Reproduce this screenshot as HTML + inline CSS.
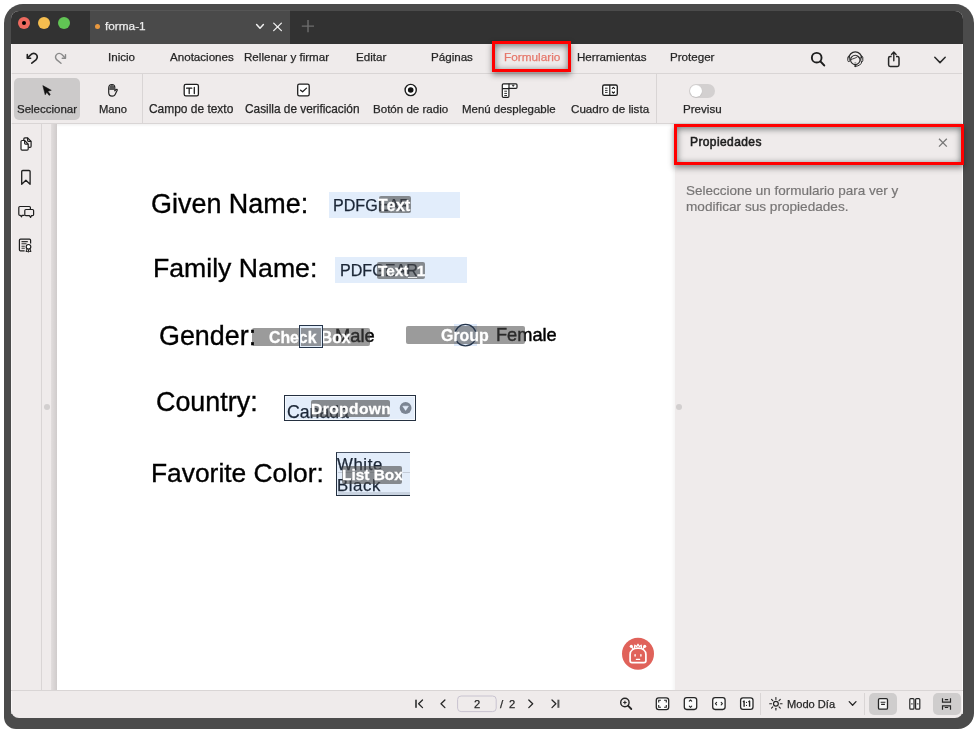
<!DOCTYPE html>
<html><head><meta charset="utf-8"><style>
html,body{margin:0;padding:0;}
body{width:974px;height:729px;position:relative;overflow:hidden;background:#fff;font-family:"Liberation Sans", sans-serif;}
.t{position:absolute;white-space:nowrap;line-height:1;font-family:"Liberation Sans", sans-serif;will-change:transform;}
</style></head><body>
<div style="position:absolute;left:4px;top:4px;width:970px;height:725px;background:#4b4b4b;border-radius:19px 19px 16px 12px;"></div>
<div style="position:absolute;left:11px;top:10.6px;width:952px;height:707.4px;background:#efebeb;border-radius:8px;overflow:hidden;"></div>
<div style="position:absolute;left:11px;top:10.6px;width:952px;height:33.4px;background:#323232;border-radius:8px 8px 0 0;"></div>
<div style="position:absolute;left:90px;top:10.6px;width:200px;height:33.4px;background:#4a4a4a;"></div>
<div style="position:absolute;left:90px;top:10px;width:200px;height:1px;background:#565656;"></div>
<div style="position:absolute;left:18px;top:17.1px;width:12.3px;height:12.3px;border-radius:50%;background:#ee6a5f;"></div>
<div style="position:absolute;left:22.1px;top:21.2px;width:4.1px;height:4.1px;border-radius:50%;background:#000;"></div>
<div style="position:absolute;left:38px;top:17.1px;width:12.3px;height:12.3px;border-radius:50%;background:#f5bd4f;"></div>
<div style="position:absolute;left:58px;top:17.1px;width:12.3px;height:12.3px;border-radius:50%;background:#61c454;"></div>
<div style="position:absolute;left:95.1px;top:24.2px;width:5px;height:5px;border-radius:50%;background:#e9983e;"></div>
<div class="t" style="left:105.00px;top:21.00px;font-size:11.8px;color:#ececec;font-weight:normal;-webkit-text-stroke:0.25px currentColor;">forma-1</div>
<div style="position:absolute;left:11px;top:73px;width:952px;height:1px;background:#d9d5d5;"></div>
<div style="position:absolute;left:11px;top:123px;width:952px;height:1px;background:#d9d5d5;"></div>
<div class="t" style="left:107.80px;top:51.00px;font-size:11.6px;color:#262626;font-weight:normal;-webkit-text-stroke:0.25px currentColor;">Inicio</div>
<div class="t" style="left:170.00px;top:51.00px;font-size:11.6px;color:#262626;font-weight:normal;-webkit-text-stroke:0.25px currentColor;">Anotaciones</div>
<div class="t" style="left:244.40px;top:51.00px;font-size:11.6px;color:#262626;font-weight:normal;-webkit-text-stroke:0.25px currentColor;">Rellenar y firmar</div>
<div class="t" style="left:356.40px;top:51.00px;font-size:11.6px;color:#262626;font-weight:normal;-webkit-text-stroke:0.25px currentColor;">Editar</div>
<div class="t" style="left:431.20px;top:51.00px;font-size:11.6px;color:#262626;font-weight:normal;-webkit-text-stroke:0.25px currentColor;">Páginas</div>
<div class="t" style="left:577.00px;top:51.00px;font-size:11.6px;color:#262626;font-weight:normal;-webkit-text-stroke:0.25px currentColor;">Herramientas</div>
<div class="t" style="left:669.80px;top:51.00px;font-size:11.6px;color:#262626;font-weight:normal;-webkit-text-stroke:0.25px currentColor;">Proteger</div>
<div class="t" style="left:503.60px;top:52.00px;font-size:11.8px;color:#e5776b;font-weight:normal;-webkit-text-stroke:0.25px currentColor;">Formulario</div>
<div style="position:absolute;left:14px;top:78px;width:66px;height:42px;background:#cccaca;border-radius:5px;"></div>
<div class="t" style="left:17.00px;top:104.00px;font-size:11.5px;color:#262626;font-weight:normal;-webkit-text-stroke:0.25px currentColor;">Seleccionar</div>
<div class="t" style="left:98.80px;top:104.00px;font-size:11.2px;color:#262626;font-weight:normal;-webkit-text-stroke:0.25px currentColor;">Mano</div>
<div class="t" style="left:149.30px;top:104.00px;font-size:11.95px;color:#262626;font-weight:normal;-webkit-text-stroke:0.25px currentColor;">Campo de texto</div>
<div class="t" style="left:245.20px;top:104.00px;font-size:11.85px;color:#262626;font-weight:normal;-webkit-text-stroke:0.25px currentColor;">Casilla de verificación</div>
<div class="t" style="left:372.70px;top:104.00px;font-size:11.57px;color:#262626;font-weight:normal;-webkit-text-stroke:0.25px currentColor;">Botón de radio</div>
<div class="t" style="left:462.00px;top:104.00px;font-size:11.46px;color:#262626;font-weight:normal;-webkit-text-stroke:0.25px currentColor;">Menú desplegable</div>
<div class="t" style="left:570.50px;top:103.00px;font-size:11.62px;color:#262626;font-weight:normal;-webkit-text-stroke:0.25px currentColor;">Cuadro de lista</div>
<div class="t" style="left:682.90px;top:104.00px;font-size:11.59px;color:#262626;font-weight:normal;-webkit-text-stroke:0.25px currentColor;">Previsu</div>
<div style="position:absolute;left:142px;top:74px;width:1px;height:49px;background:#d9d5d5;"></div>
<div style="position:absolute;left:656px;top:74px;width:1px;height:49px;background:#d9d5d5;"></div>
<div style="position:absolute;left:689px;top:84px;width:26px;height:13.6px;background:#d3d0d0;border-radius:7px;"></div>
<div style="position:absolute;left:689.6px;top:84.6px;width:12.4px;height:12.4px;border-radius:50%;background:#fff;box-shadow:0 0.5px 1px rgba(0,0,0,0.15);"></div>
<div style="position:absolute;left:41px;top:124px;width:1px;height:566px;background:#d9d5d5;"></div>
<div style="position:absolute;left:51px;top:124px;width:6px;height:566px;background:linear-gradient(90deg,#e2dede,#cfcbcb);"></div>
<div style="position:absolute;left:43.7px;top:404px;width:6px;height:6px;border-radius:50%;background:#d2cfcf;"></div>
<div style="position:absolute;left:57px;top:124px;width:618px;height:566px;background:#fff;"></div>
<div style="position:absolute;left:328.6px;top:191.7px;width:131.9px;height:26.1px;background:#e2edfb;"></div>
<div class="t" style="left:333.40px;top:197.00px;font-size:16.1px;color:#1b2636;font-weight:normal;-webkit-text-stroke:0.25px #1b2636;">PDFGEAR</div>
<div style="position:absolute;left:378.5px;top:196.1px;width:32.3px;height:17.3px;background:rgba(72,72,72,0.6);border-radius:2px;"></div>
<div class="t" style="left:378.40px;top:198.00px;font-size:15.8px;color:#fff;font-weight:bold;letter-spacing:0.35px;-webkit-text-stroke:0.3px #fff;">Text</div>
<div style="position:absolute;left:334.9px;top:257.1px;width:132.5px;height:26.3px;background:#e2edfb;"></div>
<div class="t" style="left:339.70px;top:262.00px;font-size:16.1px;color:#1b2636;font-weight:normal;-webkit-text-stroke:0.25px #1b2636;">PDFGEAR</div>
<div style="position:absolute;left:377.2px;top:261.7px;width:48.2px;height:17.0px;background:rgba(72,72,72,0.6);border-radius:2px;"></div>
<div class="t" style="left:378.20px;top:263.00px;font-size:15.3px;color:#fff;font-weight:bold;-webkit-text-stroke:0.3px #fff;">Text_1</div>
<div style="position:absolute;left:299.1px;top:324.7px;width:23.7px;height:23.8px;background:#e3eefb;"></div>
<div class="t" style="left:334.60px;top:327.00px;font-size:18.3px;color:#000;font-weight:normal;-webkit-text-stroke:0.45px #000;">Male</div>
<div style="position:absolute;left:252.2px;top:327.8px;width:117.9px;height:17.8px;background:rgba(75,75,75,0.557);border-radius:2px;"></div>
<div class="t" style="left:269.20px;top:330.00px;font-size:15.8px;color:#fff;font-weight:bold;-webkit-text-stroke:0.3px #fff;">Check Box</div>
<div style="position:absolute;left:299.1px;top:324.7px;width:23.7px;height:23.8px;box-sizing:border-box;border:1.5px solid #26354a;box-shadow:inset 0 0 0 1px rgba(227,238,251,0.9);"></div>
<div style="position:absolute;left:453.8px;top:324px;width:23.3px;height:22.2px;background:#dfeafa;"></div>
<div class="t" style="left:496.20px;top:326.00px;font-size:18.2px;color:#000;font-weight:normal;-webkit-text-stroke:0.45px #000;">Female</div>
<div style="position:absolute;left:406.1px;top:326.4px;width:118.7px;height:17.2px;background:rgba(75,75,75,0.557);border-radius:2px;"></div>
<svg style="position:absolute;left:0;top:0" width="974" height="729" viewBox="0 0 974 729" fill="none"><circle cx="465.5" cy="335.1" r="10.7" stroke="#26354a" stroke-width="1.3"/></svg>
<div class="t" style="left:441.00px;top:328.00px;font-size:15.9px;color:#fff;font-weight:bold;-webkit-text-stroke:0.3px #fff;">Group</div>
<div style="position:absolute;left:284.2px;top:394.7px;width:131.6px;height:26.2px;box-sizing:border-box;border:1.4px solid #243040;box-shadow:inset 0 0 0 1px #f4f8fd;background:#e3edfa;"></div>
<div class="t" style="left:287.40px;top:404.00px;font-size:17.7px;color:#1b2636;font-weight:normal;-webkit-text-stroke:0.25px #1b2636;">Canada</div>
<div style="position:absolute;left:310.9px;top:399.6px;width:79.1px;height:17.0px;background:rgba(72,72,72,0.6);border-radius:2px;"></div>
<div class="t" style="left:310.60px;top:401.00px;font-size:15.5px;color:#fff;font-weight:bold;letter-spacing:0.45px;-webkit-text-stroke:0.3px #fff;">Dropdown</div>
<div style="position:absolute;left:335.8px;top:452.2px;width:73.9px;height:44.1px;box-sizing:border-box;border-left:1.8px solid #243040;border-top:1.2px solid #4a5566;border-bottom:1.4px solid #243040;background:#e3edfa;"></div>
<div style="position:absolute;left:337.6px;top:471.6px;width:72px;height:0.8px;background:#c4ccd8;"></div>
<div style="position:absolute;left:337.6px;top:491.6px;width:72px;height:3.4px;background:#c9d3e0;"></div>
<div class="t" style="left:336.90px;top:457.00px;font-size:16.8px;color:#1b2636;font-weight:normal;letter-spacing:0.6px;-webkit-text-stroke:0.25px #1b2636;">White</div>
<div class="t" style="left:336.90px;top:478.00px;font-size:16.8px;color:#1b2636;font-weight:normal;letter-spacing:0.6px;-webkit-text-stroke:0.25px #1b2636;">Black</div>
<div style="position:absolute;left:342px;top:466px;width:60.2px;height:17.5px;background:rgba(72,72,72,0.6);border-radius:2px;"></div>
<div class="t" style="left:342.30px;top:467.00px;font-size:15.4px;color:#fff;font-weight:bold;-webkit-text-stroke:0.3px #fff;">List Box</div>
<div style="position:absolute;left:57px;top:124px;width:618px;height:3px;background:linear-gradient(180deg,rgba(0,0,0,0.05),rgba(0,0,0,0));"></div>
<div style="position:absolute;left:671px;top:124px;width:4px;height:566px;background:linear-gradient(90deg,rgba(0,0,0,0),rgba(0,0,0,0.035));"></div>
<div style="position:absolute;left:676.2px;top:404px;width:6px;height:6px;border-radius:50%;background:#d2cfcf;"></div>
<div style="position:absolute;left:962px;top:44px;width:1px;height:670px;background:rgba(255,255,255,0.75);"></div>
<div style="position:absolute;left:11px;top:44px;width:1px;height:670px;background:rgba(255,255,255,0.6);"></div>
<div style="position:absolute;left:11px;top:690px;width:952px;height:1px;background:#d9d5d5;"></div>
<div class="t" style="left:151.00px;top:191.00px;font-size:26.95px;color:#000;font-weight:normal;-webkit-text-stroke:0.35px #000;">Given Name:</div>
<div class="t" style="left:152.90px;top:255.00px;font-size:26.65px;color:#000;font-weight:normal;-webkit-text-stroke:0.35px #000;">Family Name:</div>
<div class="t" style="left:159.00px;top:323.00px;font-size:26.9px;color:#000;font-weight:normal;-webkit-text-stroke:0.35px #000;">Gender:</div>
<div class="t" style="left:156.10px;top:389.00px;font-size:26.9px;color:#000;font-weight:normal;-webkit-text-stroke:0.35px #000;">Country:</div>
<div class="t" style="left:151.40px;top:460.00px;font-size:26.37px;color:#000;font-weight:normal;-webkit-text-stroke:0.35px #000;">Favorite Color:</div>
<div class="t" style="left:689.60px;top:136.00px;font-size:12px;color:#1e1e1e;font-weight:normal;letter-spacing:0.4px;-webkit-text-stroke:0.55px #1e1e1e;">Propiedades</div>
<div class="t" style="left:686.00px;top:184.00px;font-size:13.5px;color:#777575;font-weight:normal;-webkit-text-stroke:0.2px #777575;">Seleccione un formulario para ver y</div>
<div class="t" style="left:686.00px;top:200.00px;font-size:13.6px;color:#777575;font-weight:normal;-webkit-text-stroke:0.2px #777575;">modificar sus propiedades.</div>
<div class="t" style="left:786.50px;top:699.00px;font-size:11.1px;color:#262626;font-weight:normal;-webkit-text-stroke:0.25px currentColor;">Modo Día</div>
<div class="t" style="left:474.00px;top:699.00px;font-size:11.2px;color:#262626;font-weight:normal;-webkit-text-stroke:0.25px currentColor;">2</div>
<div class="t" style="left:500.30px;top:698.00px;font-size:11.6px;color:#262626;font-weight:normal;-webkit-text-stroke:0.25px currentColor;">/</div>
<div class="t" style="left:509.40px;top:699.00px;font-size:11.2px;color:#262626;font-weight:normal;-webkit-text-stroke:0.25px currentColor;">2</div>
<div style="position:absolute;left:760px;top:693px;width:1px;height:22px;background:#d9d5d5;"></div>
<div style="position:absolute;left:864px;top:693px;width:1px;height:22px;background:#d9d5d5;"></div>
<div style="position:absolute;left:869px;top:693px;width:27.6px;height:21.6px;background:#cfcdcd;border-radius:5px;"></div>
<div style="position:absolute;left:933px;top:693px;width:27.7px;height:21.6px;background:#cfcdcd;border-radius:5px;"></div>
<svg style="position:absolute;left:0;top:0" width="974" height="729" viewBox="0 0 974 729" fill="none"><path d="M256.6 24.6 L260 28.2 L263.4 24.6" stroke="#f0f0f0" stroke-width="1.5" stroke-linecap="round" stroke-linejoin="round"/><path d="M273.7 23.1 L281.4 30.6 M281.4 23.1 L273.7 30.6" stroke="#f0f0f0" stroke-width="1.3" stroke-linecap="round"/><path d="M308 20 V32.2 M301.8 26.1 H314" stroke="#6e6e6e" stroke-width="1.4"/><path d="M27.3 54.6 V58.2 H30.6" stroke="#222" stroke-width="1.6" stroke-linecap="round" stroke-linejoin="round"/><path d="M27.6 57.9 L30.9 54.6 C32.4 53 35 52.9 36.3 54.6 C37.6 56.2 37.3 58.4 35.9 59.9 L31.8 63.2" stroke="#222" stroke-width="1.6" stroke-linecap="round"/><g transform="translate(92.8 0) scale(-1 1)"><path d="M27.3 54.6 V58.2 H30.6" stroke="#8a8a8a" stroke-width="1.4" stroke-linecap="round" stroke-linejoin="round"/><path d="M27.6 57.9 L30.9 54.6 C32.4 53 35 52.9 36.3 54.6 C37.6 56.2 37.3 58.4 35.9 59.9 L31.8 63.2" stroke="#8a8a8a" stroke-width="1.4" stroke-linecap="round"/></g><circle cx="816.7" cy="57.7" r="4.85" stroke="#1e1e1e" stroke-width="1.9"/><path d="M820.4 61.4 L824.2 65.4" stroke="#1e1e1e" stroke-width="2.1" stroke-linecap="round"/><path d="M848.9 58.2 A6.4 6.4 0 0 1 861.7 58.2" stroke="#2a2a2a" stroke-width="1.3"/><circle cx="855.3" cy="59.9" r="4.7" stroke="#2a2a2a" stroke-width="1.1"/><rect x="847.8" y="56.4" width="2" height="5.2" rx="1" stroke="#2a2a2a" stroke-width="1"/><rect x="860.8" y="56.4" width="2" height="5.2" rx="1" stroke="#2a2a2a" stroke-width="1"/><path d="M850.7 59.6 C852.6 58.8 855.6 58.4 857.5 56.5 C858 57.3 858.6 58 859.9 58.5" stroke="#2a2a2a" stroke-width="0.9"/><path d="M861.8 61.6 C861.3 64.6 858.7 66.1 855.6 66.2" stroke="#2a2a2a" stroke-width="1"/><circle cx="855.3" cy="66.1" r="1.1" fill="#2a2a2a"/><path d="M854.5 62.9 H856.2" stroke="#555" stroke-width="0.8"/><path d="M891.6 56.5 H890.2 C889.1 56.5 888.6 57 888.6 58.1 V64.8 C888.6 65.9 889.1 66.4 890.2 66.4 H897.4 C898.5 66.4 899 65.9 899 64.8 V58.1 C899 57 898.5 56.5 897.4 56.5 H896" stroke="#262626" stroke-width="1.5"/><path d="M893.8 60.8 V52.2 M891.5 54.4 L893.8 52 L896.1 54.4" stroke="#262626" stroke-width="1.4" stroke-linecap="round" stroke-linejoin="round"/><path d="M934.8 57.3 L940 62.6 L945.2 57.3" stroke="#2a2a2a" stroke-width="1.5" stroke-linecap="round" stroke-linejoin="round"/><path d="M42.8 85.6 L51.3 90.3 L47.9 91.3 L50.3 94.5 L49.1 95.4 L46.8 92.2 L45.2 94.8 Z" fill="#111" stroke="#111" stroke-width="0.5" stroke-linejoin="round"/><path d="M108.7 88.2 C108.7 85.6 110.3 84.5 112 84.5 C113.7 84.5 114.8 85.6 114.8 87.5 V90.8 L116 89.6 C116.6 89 117.4 89.4 117.2 90.2 L115.6 93.6 C115 95.3 113.8 96.2 112.1 96.2 C110 96.2 108.7 94.8 108.7 92.6 Z" stroke="#222" stroke-width="1.2" stroke-linejoin="round"/><path d="M109.2 89.8 C109.2 86.2 110.5 85.1 112 85.1 C113.5 85.1 114.3 86.2 114.3 88 V90 H109.2 Z" fill="#555"/><rect x="184.2" y="84.3" width="14.2" height="11.6" rx="1.6" fill="#fff" stroke="#1e1e1e" stroke-width="1.3"/><path d="M186.6 88.2 H191.8 M189.2 88.2 V93.6 M194.3 87.4 V93.5" stroke="#1e1e1e" stroke-width="1.3" stroke-linecap="round"/><rect x="297.7" y="84.2" width="11.5" height="11.7" rx="1.6" fill="#fff" stroke="#1e1e1e" stroke-width="1.3"/><path d="M300.6 90.2 L302.6 91.8 L306.5 88.1" stroke="#1e1e1e" stroke-width="1.3" stroke-linecap="round" stroke-linejoin="round"/><circle cx="410.7" cy="90" r="5.6" fill="#fff" stroke="#1e1e1e" stroke-width="1.4"/><circle cx="410.7" cy="90" r="2.8" fill="#111"/><path d="M502.3 96.2 V84.9 C502.3 84.1 502.7 83.8 503.5 83.8 H516 C516.8 83.8 517 84.1 517 84.9 V87.2 C517 88 516.8 88.3 516 88.3 H508.9 V96.2 C508.9 97 508.6 97.3 507.8 97.3 H503.5 C502.7 97.3 502.3 97 502.3 96.2 Z" fill="#fff" stroke="#1e1e1e" stroke-width="1.2"/><path d="M502.3 88.6 H509 M509 83.8 V88.6" stroke="#1e1e1e" stroke-width="1.2"/><path d="M512.2 85.2 H514.2 L513.2 86.6 Z" fill="#1e1e1e" stroke="#1e1e1e" stroke-width="0.6" stroke-linejoin="round"/><path d="M504.3 91.2 H507 M504.3 93.4 H507 M504.3 95.5 H507" stroke="#333" stroke-width="1"/><rect x="602.7" y="85" width="14.6" height="10.4" rx="1.6" fill="#fff" stroke="#1e1e1e" stroke-width="1.3"/><path d="M609.8 85 V95.4" stroke="#1e1e1e" stroke-width="1.2"/><path d="M605 88.2 H607.6 M605 90.4 H607.6 M605 92.4 H607.6" stroke="#333" stroke-width="1"/><path d="M612.3 88.4 L613.4 87.3 L614.5 88.4 M612.3 92 L613.4 93.1 L614.5 92" stroke="#111" stroke-width="1.1" stroke-linecap="round" stroke-linejoin="round"/><path d="M23.8 140.3 V138.9 C23.8 138.2 24.2 137.8 24.9 137.8 H27.6 L31.1 141.4 V146.3 C31.1 147 30.7 147.4 30 147.4 H28.4" stroke="#1e1e1e" stroke-width="1.2" stroke-linejoin="round"/><path d="M27.6 137.8 V140.5 C27.6 141.1 27.9 141.4 28.5 141.4 H31.1" stroke="#1e1e1e" stroke-width="1.1" stroke-linejoin="round"/><path d="M21 141.6 C21 140.9 21.4 140.5 22.1 140.5 H24.6 L28.2 144.1 V149 C28.2 149.7 27.8 150.1 27.1 150.1 H22.1 C21.4 150.1 21 149.7 21 149 Z" fill="#fff" stroke="#1e1e1e" stroke-width="1.2" stroke-linejoin="round"/><path d="M24.6 140.5 V143.2 C24.6 143.8 24.9 144.1 25.5 144.1 H28.2" stroke="#1e1e1e" stroke-width="1.1" stroke-linejoin="round"/><path d="M21.7 184.3 V171.6 C21.7 170.9 22.1 170.5 22.8 170.5 H29 C29.7 170.5 30.1 170.9 30.1 171.6 V184.3 L25.9 180.2 Z" stroke="#1e1e1e" stroke-width="1.3" stroke-linejoin="round"/><path d="M24.6 215.3 H21.9 L21.6 216.8 L20.3 215.3 H19.9 C19.2 215.3 18.8 214.9 18.8 214.2 V207.6 C18.8 206.9 19.2 206.5 19.9 206.5 H29.3 C30 206.5 30.4 206.9 30.4 207.6 V209.2" stroke="#1e1e1e" stroke-width="1.2" stroke-linejoin="round"/><path d="M25.9 209.5 H32.5 C33.2 209.5 33.6 209.9 33.6 210.6 V214.5 C33.6 215.2 33.2 215.6 32.5 215.6 H31.5 L30.6 217.4 L29.4 215.6 H25.9 C25.2 215.6 24.8 215.2 24.8 214.5 V210.6 C24.8 209.9 25.2 209.5 25.9 209.5 Z" fill="#efebeb" stroke="#1e1e1e" stroke-width="1.2" stroke-linejoin="round"/><path d="M30.6 243.4 V240.2 C30.6 239.5 30.2 239.1 29.5 239.1 H20.5 C19.8 239.1 19.4 239.5 19.4 240.2 V249.8 C19.4 250.5 19.8 250.9 20.5 250.9 H24.6" stroke="#1e1e1e" stroke-width="1.2"/><path d="M21.5 241.6 H27.8 M21.5 243.7 H26.5 M21.5 246.2 H24.8 M21.5 248.3 H24.8" stroke="#333" stroke-width="1.1"/><circle cx="28.5" cy="246.8" r="2.3" fill="#fff" stroke="#1e1e1e" stroke-width="1.2"/><path d="M27 248.8 L26 251.6 L27.4 251.2 L28.2 252.2 L28.7 249.4 M30 248.8 L31 251.6 L29.6 251.2 L28.8 252.2" stroke="#1e1e1e" stroke-width="1" stroke-linejoin="round"/><circle cx="405.6" cy="408" r="5.9" fill="#7b8593"/><path d="M402.8 406.2 H408.4 L405.6 410.4 Z" fill="#e3edfa" stroke="#e3edfa" stroke-width="0.6" stroke-linejoin="round"/><path d="M939 138.8 L946.8 146.6 M946.8 138.8 L939 146.6" stroke="#777" stroke-width="1.3"/><circle cx="638" cy="653.8" r="16" fill="#e0625a"/><path d="M632 662.6 C630.9 662.6 630.1 661.8 630.1 660.7 V654.6 C630.1 650.4 633.5 648.2 638 648.2 C642.5 648.2 645.9 650.4 645.9 654.6 V660.7 C645.9 661.8 645.1 662.6 644 662.6 Z" stroke="#fff" stroke-width="1.7"/><path d="M635.1 654.6 V656 M640.9 654.6 V656" stroke="#fff" stroke-width="1.4" stroke-linecap="round"/><path d="M636.4 659.4 H639.6" stroke="#fff" stroke-width="1.3" stroke-linecap="round"/><path d="M633.3 649.2 L631.6 646.8 M642.7 649.2 L644.4 646.8" stroke="#fff" stroke-width="1.4"/><circle cx="631.3" cy="646.3" r="1.6" fill="#fff"/><circle cx="644.7" cy="646.3" r="1.6" fill="#fff"/><path d="M634.4 648.2 L634.8 645.2 L636.6 646.6 L638 644.2 L639.4 646.6 L641.2 645.2 L641.6 648.2" stroke="#fff" stroke-width="1.2" stroke-linejoin="round"/><rect x="415" y="699.7" width="2" height="8.1" fill="#555"/><path d="M422.5 700 L418.6 703.8 L422.5 707.6" stroke="#262626" stroke-width="1.3" stroke-linecap="round" stroke-linejoin="round"/><path d="M444.9 700 L441 703.8 L444.9 707.6" stroke="#262626" stroke-width="1.3" stroke-linecap="round" stroke-linejoin="round"/><rect x="457.6" y="696" width="38.6" height="15.6" rx="3.5" stroke="#c8c3d0" stroke-width="1"/><path d="M528.8 700 L532.7 703.8 L528.8 707.6" stroke="#262626" stroke-width="1.3" stroke-linecap="round" stroke-linejoin="round"/><path d="M552 700 L555.9 703.8 L552 707.6" stroke="#262626" stroke-width="1.3" stroke-linecap="round" stroke-linejoin="round"/><rect x="557.4" y="699.7" width="2" height="8.1" fill="#555"/><circle cx="624.9" cy="702.5" r="4.2" stroke="#262626" stroke-width="1.4"/><path d="M628 705.7 L631.3 709" stroke="#262626" stroke-width="1.8" stroke-linecap="round"/><path d="M623.2 702.5 H626.6 M624.9 700.8 V704.2" stroke="#262626" stroke-width="1.1"/><rect x="656.3" y="697.8" width="12.4" height="11.8" rx="2.4" fill="#fbfbfb" stroke="#262626" stroke-width="1.3"/><path d="M658.7 702.4 V700.2 H660.9 M664.1 700.2 H666.3 V702.4 M666.3 705 V707.2 H664.1 M660.9 707.2 H658.7 V705" stroke="#262626" stroke-width="1.1"/><rect x="684.3" y="697.7" width="12.4" height="11.8" rx="2.4" fill="#fbfbfb" stroke="#262626" stroke-width="1.3"/><path d="M689.3 701.2 L690.5 700 L691.7 701.2 M689.3 706.2 L690.5 707.4 L691.7 706.2" stroke="#262626" stroke-width="1.1" stroke-linecap="round" stroke-linejoin="round"/><rect x="712.7" y="697.7" width="12.4" height="11.8" rx="2.4" fill="#fbfbfb" stroke="#262626" stroke-width="1.3"/><path d="M716.6 702.4 L715.4 703.6 L716.6 704.8 M721.2 702.4 L722.4 703.6 L721.2 704.8" stroke="#262626" stroke-width="1.1" stroke-linecap="round" stroke-linejoin="round"/><rect x="740.6" y="697.8" width="12.4" height="11.6" rx="2.4" fill="#fbfbfb" stroke="#262626" stroke-width="1.3"/><path d="M742.9 702 L744.1 701.1 V706.7 M748.4 702 L749.6 701.1 V706.7" stroke="#262626" stroke-width="1.4" stroke-linejoin="round"/><circle cx="746.5" cy="702.4" r="0.6" fill="#262626"/><circle cx="746.5" cy="705.4" r="0.6" fill="#262626"/><circle cx="775.9" cy="703.8" r="2.4" stroke="#262626" stroke-width="1.2"/><path d="M780.30 703.80 L782.10 703.80" stroke="#262626" stroke-width="1.1" stroke-linecap="round"/><path d="M779.01 706.91 L780.28 708.18" stroke="#262626" stroke-width="1.1" stroke-linecap="round"/><path d="M775.90 708.20 L775.90 710.00" stroke="#262626" stroke-width="1.1" stroke-linecap="round"/><path d="M772.79 706.91 L771.52 708.18" stroke="#262626" stroke-width="1.1" stroke-linecap="round"/><path d="M771.50 703.80 L769.70 703.80" stroke="#262626" stroke-width="1.1" stroke-linecap="round"/><path d="M772.79 700.69 L771.52 699.42" stroke="#262626" stroke-width="1.1" stroke-linecap="round"/><path d="M775.90 699.40 L775.90 697.60" stroke="#262626" stroke-width="1.1" stroke-linecap="round"/><path d="M779.01 700.69 L780.28 699.42" stroke="#262626" stroke-width="1.1" stroke-linecap="round"/><path d="M849.2 701.6 L852.6 705.2 L856 701.6" stroke="#262626" stroke-width="1.3" stroke-linecap="round" stroke-linejoin="round"/><rect x="878.5" y="698.6" width="9" height="10.6" rx="1.2" fill="#f7f7f7" stroke="#262626" stroke-width="1.3"/><path d="M880.6 702.2 H885.4 M881.1 704.4 H884.9" stroke="#262626" stroke-width="1.1"/><rect x="909.8" y="698.6" width="4.2" height="10.6" rx="1" fill="#fafafa" stroke="#262626" stroke-width="1.2"/><rect x="915.6" y="698.6" width="4.2" height="10.6" rx="1" fill="#fafafa" stroke="#262626" stroke-width="1.2"/><path d="M911 703.9 H912.8 M916.8 703.9 H918.6" stroke="#262626" stroke-width="0.9"/><path d="M942.5 698.3 V702.2 H950.5 V698.3 M942.5 709.8 V705.8 H950.5 V709.8 M944.8 699.6 H948.2 M944.8 707.5 H948.2" stroke="#262626" stroke-width="1.2"/></svg>
<div style="position:absolute;left:492px;top:41.1px;width:78.9px;height:30.9px;box-sizing:border-box;border:3.1px solid #ff0000;box-shadow:0 2.5px 6px rgba(0,0,0,0.42), inset 0 1.5px 6px 0.5px rgba(0,15,15,0.5);"></div>
<div style="position:absolute;left:674px;top:124px;width:290px;height:40.8px;box-sizing:border-box;border:3.1px solid #ff0000;box-shadow:0 2.5px 6px rgba(0,0,0,0.42), inset 0 1.5px 6px 0.5px rgba(0,15,15,0.5);"></div>
</body></html>
